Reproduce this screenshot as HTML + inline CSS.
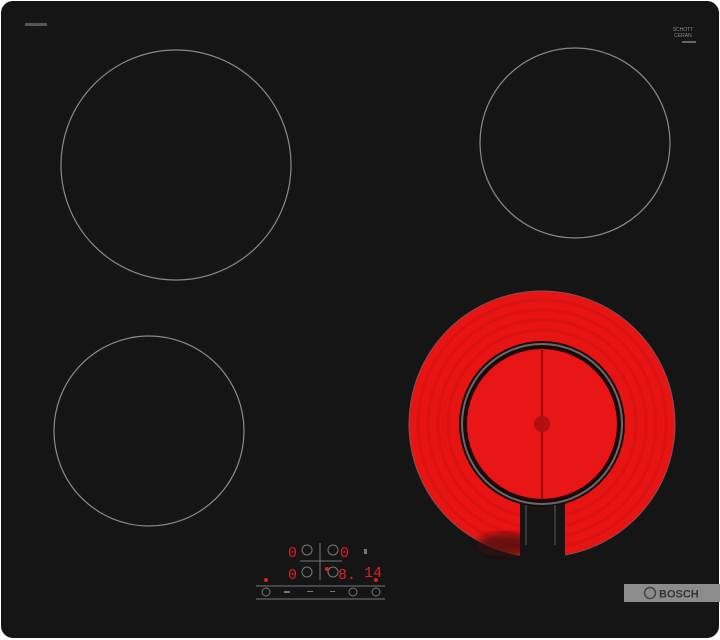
<!DOCTYPE html>
<html><head><style>
html,body{margin:0;padding:0;background:#fff;width:720px;height:640px;overflow:hidden}
svg{display:block}
</style></head><body>
<svg width="720" height="640" viewBox="0 0 720 640" xmlns="http://www.w3.org/2000/svg">
<defs>
<filter id="bl"><feGaussianBlur stdDeviation="4"/></filter>
</defs>
<rect x="1" y="1" width="718" height="637" rx="12" fill="#151515"/>
<g fill="none" stroke="#8a8a8a" stroke-width="1.2">
<circle cx="176" cy="165" r="115"/>
<circle cx="575" cy="143" r="95"/>
<circle cx="149" cy="431" r="95"/>
</g>
<!-- red zone -->
<circle cx="542" cy="424" r="133" fill="#e81414" stroke="#8a5050" stroke-width="1"/>
<g fill="none" stroke="#c81010" stroke-width="3" opacity="0.45">
<circle cx="542" cy="424" r="124"/>
<circle cx="542" cy="424" r="114"/>
<circle cx="542" cy="424" r="104"/>
<circle cx="542" cy="424" r="94"/>
</g>
<ellipse cx="505" cy="545" rx="28" ry="12" fill="#3a0808" opacity="0.7" filter="url(#bl)"/>
<rect x="520" y="495" width="45" height="65" fill="#151515"/>
<circle cx="542" cy="424" r="83" fill="#1a0a0a"/>
<circle cx="542" cy="424" r="80" fill="none" stroke="#6a6a6a" stroke-width="2"/>
<circle cx="542" cy="424" r="75" fill="#e81616"/>
<line x1="542" y1="350" x2="542" y2="500" stroke="#600" stroke-width="1.2"/>
<circle cx="542" cy="424" r="8" fill="#b01010"/>
<line x1="526" y1="505" x2="526" y2="545" stroke="#444" stroke-width="1.5"/>
<line x1="555" y1="505" x2="555" y2="545" stroke="#444" stroke-width="1.5"/>
<!-- top labels -->
<rect x="25" y="23" width="22" height="3" fill="#555"/>
<text x="683" y="31" font-family="Liberation Sans,sans-serif" font-size="5" fill="#888" text-anchor="middle">SCHOTT</text>
<text x="683" y="37" font-family="Liberation Sans,sans-serif" font-size="5" fill="#888" text-anchor="middle">CERAN</text>
<rect x="682" y="41" width="14" height="2" fill="#666"/>
<!-- control panel -->
<g font-family="Liberation Mono,monospace" fill="#d22" font-size="15">
<text x="288" y="557">0</text>
<text x="340" y="557">0</text>
<text x="288" y="579">0</text>
<text x="338" y="579">8.</text>
<text x="364" y="577">14</text>
</g>
<g fill="none" stroke="#777" stroke-width="1">
<circle cx="307" cy="550" r="5"/><circle cx="333" cy="550" r="5"/>
<circle cx="307" cy="572" r="5"/><circle cx="333" cy="572" r="5"/>
<line x1="320" y1="543" x2="320" y2="580"/>
<line x1="300" y1="561" x2="342" y2="561"/>
<line x1="256" y1="586" x2="385" y2="586"/>
<line x1="256" y1="599" x2="385" y2="599"/>
<circle cx="266" cy="592" r="4"/>
<circle cx="353" cy="592" r="4"/>
<circle cx="376" cy="592" r="4"/>
</g>
<circle cx="266" cy="580" r="2" fill="#d22"/>
<circle cx="376" cy="580" r="2" fill="#d22"/>
<circle cx="327" cy="569" r="2" fill="#d22"/>
<rect x="364" y="549" width="3" height="5" fill="#777"/>
<rect x="284" y="591" width="6" height="2" fill="#777"/>
<rect x="307" y="591" width="6" height="1" fill="#777"/>
<rect x="330" y="591" width="5" height="1" fill="#777"/>
<!-- bosch -->
<rect x="624" y="584" width="96" height="18" fill="#8c8c8c"/>
<circle cx="650" cy="593" r="5.5" fill="none" stroke="#444" stroke-width="1.5"/>
<text x="659" y="597.5" font-family="Liberation Sans,sans-serif" font-weight="bold" font-size="11" fill="#333">BOSCH</text>
</svg>
</body></html>
